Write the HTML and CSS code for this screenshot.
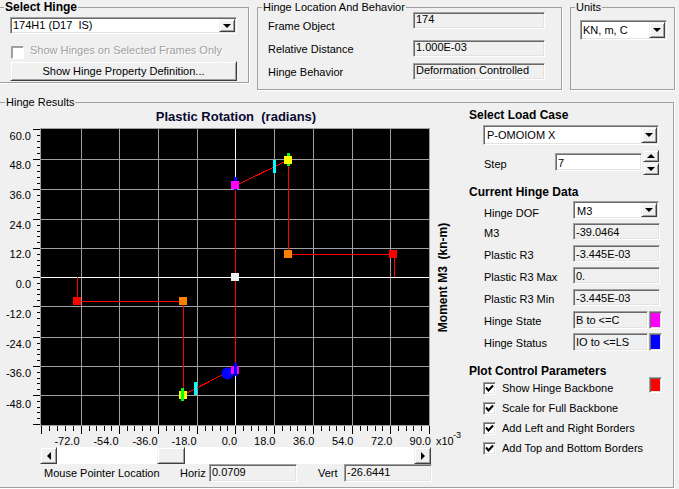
FILE: index.html
```html
<!DOCTYPE html>
<html>
<head>
<meta charset="utf-8">
<title>Hinge Results</title>
<link rel="stylesheet" href="styles.css">
</head>
<body>
<div class="top">
  <fieldset class="grp g-hinge">
    <legend class="bold">Select Hinge</legend>
    <div class="combo combo-hinge"><span class="ctext">174H1 (D17  IS)</span><span class="dd"></span></div>
    <div class="chk-row"><span class="cb cb-dis"></span><span class="dis-text">Show Hinges on Selected Frames Only</span></div>
    <div class="btn btn-def">Show Hinge Property Definition...</div>
  </fieldset>
  <fieldset class="grp g-loc">
    <legend>Hinge Location And Behavior</legend>
    <div class="loc-row r1"><span class="loc-label">Frame Object</span><span class="field loc-field">174</span></div>
    <div class="loc-row r2"><span class="loc-label">Relative Distance</span><span class="field loc-field">1.000E-03</span></div>
    <div class="loc-row r3"><span class="loc-label">Hinge Behavior</span><span class="field loc-field">Deformation Controlled</span></div>
  </fieldset>
  <fieldset class="grp g-units">
    <legend>Units</legend>
    <div class="combo combo-units"><span class="ctext">KN, m, C</span><span class="dd"></span></div>
  </fieldset>
</div>
<fieldset class="grp g-results">
  <legend>Hinge Results</legend>
  <div class="results">
    <div class="plot-col">
      <svg class="chart" width="469" height="337" viewBox="0 109 469 337">
        <text class="ctitle" x="236" y="121" text-anchor="middle">Plastic Rotation&#160; (radians)</text>
        <rect x="40" y="128" width="390" height="298" fill="#a0a0a0"/>
        <rect x="41" y="129" width="388" height="296" fill="#000"/>
        <path stroke="#a0a0a0" stroke-width="1" fill="none" d="M81.5 129V425M119.5 129V425M158.5 129V425M197.5 129V425M274.5 129V425M313.5 129V425M352.5 129V425M390.5 129V425M41 159.5H429M41 189.5H429M41 219.5H429M41 248.5H429M41 306.5H429M41 337.5H429M41 366.5H429M41 395.5H429"/>
        <path stroke="#ffffff" stroke-width="1" fill="none" d="M235.5 129V425M41 277.5H429"/>
        <path stroke="#000" stroke-width="1" fill="none" d="M33 129.5H40M33 159.5H40M33 189.5H40M33 219.5H40M33 248.5H40M33 277.5H40M33 306.5H40M33 337.5H40M33 366.5H40M33 395.5H40M33 424.5H40M37 135.5H40M37 141.5H40M37 147.5H40M37 153.5H40M37 165.5H40M37 171.5H40M37 177.5H40M37 183.5H40M37 195.5H40M37 201.5H40M37 207.5H40M37 213.5H40M37 225.5H40M37 231.5H40M37 236.5H40M37 242.5H40M37 254.5H40M37 260.5H40M37 265.5H40M37 271.5H40M37 283.5H40M37 289.5H40M37 294.5H40M37 300.5H40M37 312.5H40M37 318.5H40M37 325.5H40M37 331.5H40M37 343.5H40M37 349.5H40M37 354.5H40M37 360.5H40M37 372.5H40M37 378.5H40M37 383.5H40M37 389.5H40M37 401.5H40M37 407.5H40M37 412.5H40M37 418.5H40"/>
        <path stroke="#000" stroke-width="1" fill="none" d="M41.5 426V434M81.5 426V434M119.5 426V434M158.5 426V434M197.5 426V434M235.5 426V434M274.5 426V434M313.5 426V434M352.5 426V434M390.5 426V434M429.5 426V434M49.5 426V431M57.5 426V431M65.5 426V431M73.5 426V431M89.5 426V431M96.5 426V431M104.5 426V431M111.5 426V431M127.5 426V431M134.5 426V431M142.5 426V431M150.5 426V431M166.5 426V431M174.5 426V431M181.5 426V431M189.5 426V431M205.5 426V431M212.5 426V431M220.5 426V431M227.5 426V431M243.5 426V431M251.5 426V431M258.5 426V431M266.5 426V431M282.5 426V431M290.5 426V431M297.5 426V431M305.5 426V431M321.5 426V431M329.5 426V431M336.5 426V431M344.5 426V431M360.5 426V431M367.5 426V431M375.5 426V431M382.5 426V431M398.5 426V431M406.5 426V431M413.5 426V431M421.5 426V431"/>
        <path stroke="#ff0000" stroke-width="1" fill="none" d="M77.5 277V298M77 301.5H183M183.5 301V392M235.5 189V366M288.5 164V250M292 254.5H389M394.5 258V277"/>
        <path stroke="#ff0000" stroke-width="1" fill="none" shape-rendering="crispEdges" d="M187 393L224 374M239 184L284 162"/>
        <rect x="73" y="297" width="8" height="8" fill="#ff0000"/>
        <rect x="179" y="297" width="8" height="8" fill="#ff8000"/>
        <rect x="179" y="391" width="8" height="8" fill="#ffff00"/>
        <rect x="181" y="388" width="3" height="13" fill="#00ff00"/>
        <rect x="194" y="382" width="3" height="13" fill="#00ffff"/>
        <circle cx="227.5" cy="373.5" r="6" fill="#0000ff"/>
        <rect x="231" y="366" width="8" height="8" fill="#ff00ff"/>
        <rect x="234" y="363" width="3" height="13" fill="#0000ff"/>
        <rect x="231" y="273" width="8" height="8" fill="#f0f0f0"/>
        <rect x="234" y="177" width="3" height="13" fill="#0000ff"/>
        <rect x="231" y="181" width="8" height="8" fill="#ff00ff"/>
        <rect x="273" y="160" width="3" height="13" fill="#00ffff"/>
        <rect x="287" y="153" width="3" height="13" fill="#00ff00"/>
        <rect x="284" y="156" width="8" height="8" fill="#ffff00"/>
        <rect x="284" y="250" width="8" height="8" fill="#ff8000"/>
        <rect x="389" y="250" width="8" height="8" fill="#ff0000"/>
        <g class="ax" text-anchor="end">
          <text x="31" y="139.5">60.0</text>
          <text x="31" y="169">48.0</text>
          <text x="31" y="198.5">36.0</text>
          <text x="31" y="228.5">24.0</text>
          <text x="31" y="257.5">12.0</text>
          <text x="31" y="287.5">0.0</text>
          <text x="31" y="318">-12.0</text>
          <text x="31" y="348">-24.0</text>
          <text x="31" y="377">-36.0</text>
          <text x="31" y="407.5">-48.0</text>
          <text x="79.5" y="445">-72.0</text>
          <text x="118.5" y="445">-54.0</text>
          <text x="157.5" y="445">-36.0</text>
          <text x="196.5" y="445">-18.0</text>
          <text x="237" y="445">0.0</text>
          <text x="275.5" y="445">18.0</text>
          <text x="314.5" y="445">36.0</text>
          <text x="353.5" y="445">54.0</text>
          <text x="392.5" y="445">72.0</text>
          <text x="431" y="445">90.0</text>
        </g>
        <text class="ax" x="436" y="445">x10</text>
        <text class="ax sup" x="453" y="437.5">-3</text>
        <text class="ylab" transform="translate(447 277.5) rotate(-90)" text-anchor="middle">Moment M3&#160; (kn-m)</text>
      </svg>
      <div class="hscroll">
        <span class="sbtn sb-left"></span>
        <span class="track"><span class="thumb"></span></span>
        <span class="sbtn sb-right"></span>
      </div>
      <div class="mouse-row">
        <span class="mp-label">Mouse Pointer Location</span>
        <span class="h-label">Horiz</span>
        <span class="field mfield">0.0709</span>
        <span class="v-label">Vert</span>
        <span class="field mfield">-26.6441</span>
      </div>
    </div>
    <div class="side">
      <div class="stitle">Select Load Case</div>
      <div class="combo combo-load"><span class="ctext">P-OMOIOM X</span><span class="dd"></span></div>
      <div class="step-row">
        <span class="step-label">Step</span>
        <span class="field step-field">7</span>
        <span class="spin"><span class="spin-btn up"></span><span class="spin-btn down"></span></span>
      </div>
      <div class="stitle t2">Current Hinge Data</div>
      <div class="data">
        <div class="drow"><span class="dlabel dof">Hinge DOF</span><span class="combo combo-dof"><span class="ctext">M3</span><span class="dd"></span></span></div>
        <div class="drow"><span class="dlabel">M3</span><span class="field dfield">-39.0464</span></div>
        <div class="drow"><span class="dlabel">Plastic R3</span><span class="field dfield">-3.445E-03</span></div>
        <div class="drow"><span class="dlabel">Plastic R3 Max</span><span class="field dfield">0.</span></div>
        <div class="drow"><span class="dlabel">Plastic R3 Min</span><span class="field dfield">-3.445E-03</span></div>
        <div class="drow"><span class="dlabel">Hinge State</span><span class="field dfield sfield">B to &lt;=C</span><span class="swatch magenta"></span></div>
        <div class="drow"><span class="dlabel">Hinge Status</span><span class="field dfield sfield">IO to &lt;=LS</span><span class="swatch blue"></span></div>
      </div>
      <div class="stitle t3">Plot Control Parameters</div>
      <div class="checks">
        <div class="crow"><span class="cb"><svg width="9" height="9" viewBox="0 0 9 9"><path d="M1 3.5L3.5 6.5L8 1.5" fill="none" stroke="#000" stroke-width="2"/></svg></span><span>Show Hinge Backbone</span><span class="swatch red"></span></div>
        <div class="crow"><span class="cb"><svg width="9" height="9" viewBox="0 0 9 9"><path d="M1 3.5L3.5 6.5L8 1.5" fill="none" stroke="#000" stroke-width="2"/></svg></span><span>Scale for Full Backbone</span></div>
        <div class="crow"><span class="cb"><svg width="9" height="9" viewBox="0 0 9 9"><path d="M1 3.5L3.5 6.5L8 1.5" fill="none" stroke="#000" stroke-width="2"/></svg></span><span>Add Left and Right Borders</span></div>
        <div class="crow"><span class="cb"><svg width="9" height="9" viewBox="0 0 9 9"><path d="M1 3.5L3.5 6.5L8 1.5" fill="none" stroke="#000" stroke-width="2"/></svg></span><span>Add Top and Bottom Borders</span></div>
      </div>
    </div>
  </div>
</fieldset>
</body>
</html>
```

FILE: styles.css
```css
* { box-sizing: border-box; }
html, body { margin: 0; padding: 0; }
body {
  width: 679px;
  height: 489px;
  overflow: hidden;
  background: #f0f0f0;
  font-family: "Liberation Sans", Arial, sans-serif;
  font-size: 11px;
  line-height: 13px;
  color: #000;
}

/* group boxes */
.top { display: flex; align-items: flex-start; }
.grp {
  margin: 0;
  padding: 0;
  min-width: 0;
  border: 1px solid #a0a0a0;
  box-shadow: 1px 1px 0 #fff;
}
.grp > legend {
  padding: 0 1px;
  margin-left: 4px;
  font-size: 11px;
  line-height: 14px;
}
.grp > legend.bold { font-weight: bold; font-size: 12px; }
.g-hinge { margin-left: -1px; width: 250px; height: 83px; }
.g-loc { margin-left: 8px; width: 305px; height: 90px; }
.g-units { margin-left: 8px; width: 105px; height: 90px; }
.g-results { margin: 5px 0 0 -1px; width: 675px; height: 393px; }
.g-results > legend { margin-left: 5px; }

/* 3D controls */
.combo, .field, .cb, .swatch {
  border: 1px solid;
  border-color: #a0a0a0 #fff #fff #a0a0a0;
  box-shadow: inset 1px 1px 0 #696969, inset -1px -1px 0 #e3e3e3;
}
.combo {
  display: flex;
  align-items: center;
  background: #fff;
  padding: 1px;
}
.combo .ctext { flex: 1; padding-left: 1px; white-space: pre; line-height: 13px; }
.dd, .btn, .sbtn, .thumb, .spin-btn {
  background: #f0f0f0;
  border: 1px solid;
  border-color: #f0f0f0 #404040 #404040 #f0f0f0;
  box-shadow: inset 1px 1px 0 #fff, inset -1px -1px 0 #a0a0a0;
}
.dd {
  align-self: stretch;
  width: 16px;
  display: flex;
  align-items: center;
  justify-content: center;
}
.dd::after {
  content: "";
  border-style: solid;
  border-width: 4px 4px 0;
  border-color: #000 transparent transparent;
}
.field {
  display: block;
  background: #f0f0f0;
  padding: 0 2px;
  white-space: nowrap;
  overflow: hidden;
}
.btn {
  display: flex;
  align-items: center;
  justify-content: center;
}

/* select hinge */
.combo-hinge { margin: 3px 0 0 10px; width: 227px; height: 17px; }
.chk-row { display: flex; align-items: flex-start; margin: 10px 0 0 11px; height: 13px; }
.cb-dis {
  width: 12px;
  height: 12px;
  margin: 2px 6px 0 0;
  background: #f0f0f0;
  box-shadow: inset 1px 1px 0 #a0a0a0;
}
.dis-text { color: #a0a0a0; text-shadow: 1px 1px 0 #fff; }
.btn-def { margin: 4px 0 0 10px; width: 227px; height: 20px; }

/* hinge location */
.loc-row { display: flex; align-items: flex-start; height: 17px; padding-left: 10px; }
.loc-label { width: 145px; }
.loc-field { width: 132px; height: 17px; }
.r1 { margin-top: -2px; }
.r1 .loc-label { padding-top: 8px; }
.r2 { margin-top: 11px; }
.r2 .loc-label, .r3 .loc-label { padding-top: 3px; }
.r3 { margin-top: 6px; }

/* units */
.combo-units { margin: 6px 0 0 9px; width: 87px; height: 20px; }

/* results */
.results { display: flex; }
.plot-col { width: 469px; display: flex; flex-direction: column; }
.chart { display: block; }
.chart text { font-family: "Liberation Sans", Arial, sans-serif; font-size: 11px; fill: #000; }
.chart .ctitle { font-weight: bold; font-size: 13px; fill: #0a0a32; }
.chart .ylab { font-weight: bold; font-size: 12px; }
.chart .sup { font-size: 9px; }

.hscroll { display: flex; margin: 1px 0 0 40px; width: 391px; height: 17px; }
.sbtn { width: 17px; height: 17px; display: flex; align-items: center; justify-content: center; }
.sb-left::after {
  content: "";
  border-style: solid;
  border-width: 4px 4px 4px 0;
  border-color: transparent #000 transparent transparent;
}
.sb-right::after {
  content: "";
  border-style: solid;
  border-width: 4px 0 4px 4px;
  border-color: transparent transparent transparent #000;
}
.track { flex: 1; background: #fff; display: flex; }
.thumb { margin-left: 100px; width: 28px; height: 17px; }

.mouse-row { display: flex; align-items: center; height: 18px; }
.mp-label { margin-left: 44px; width: 136px; }
.h-label { width: 29px; }
.mfield { width: 88px; height: 18px; padding: 1px 2px 0; }
.v-label { width: 47px; padding-left: 21px; }

/* side panel */
.side { flex: 1; display: flex; flex-direction: column; }
.stitle { font-weight: bold; font-size: 12px; line-height: 12px; }
.t2 { margin-top: 11px; }
.t3 { margin-top: 10px; }
.combo-load { margin: 4px 0 0 14px; width: 176px; height: 20px; }
.combo-load .ctext { padding-left: 2px; }
.step-row { display: flex; margin: 5px 0 0 14px; height: 25px; }
.step-label { width: 72px; padding: 8px 0 0 1px; }
.step-field { width: 87px; height: 18px; margin-top: 3px; padding: 3px 2px 0; background: #fff; }
.spin { margin-left: 1px; width: 16px; display: flex; flex-direction: column; gap: 1px; }
.spin-btn { height: 12px; display: flex; align-items: center; justify-content: center; }
.spin-btn.up::after {
  content: "";
  border-style: solid;
  border-width: 0 4px 4px;
  border-color: transparent transparent #000;
}
.spin-btn.down::after {
  content: "";
  border-style: solid;
  border-width: 4px 4px 0;
  border-color: #000 transparent transparent;
}
.data { margin: 3px 0 0 14px; }
.drow { display: flex; align-items: flex-start; height: 22px; }
.dlabel { width: 90px; padding: 4px 0 0 1px; }
.dlabel.dof { padding-top: 6px; }
.combo-dof { width: 86px; height: 18px; }
.combo-dof .ctext { padding: 2px 0 0 2px; }
.dfield { width: 87px; height: 17px; padding: 2px 2px 0; }
.sfield { width: 75px; height: 18px; }
.swatch { display: block; width: 13px; height: 18px; margin-left: 1px; }
.swatch.magenta { background: #ff00ff; }
.swatch.blue { background: #0000ff; }
.checks { margin-top: 1px; }
.crow { display: flex; align-items: center; height: 20px; margin-left: 14px; }
.cb {
  width: 13px;
  height: 13px;
  margin-right: 6px;
  background: #fff;
  display: flex;
  align-items: center;
  justify-content: center;
}
.swatch.red {
  background: #ff0000;
  margin: -1px 11px 0 auto;
  align-self: flex-start;
  height: 16px;
}
```
